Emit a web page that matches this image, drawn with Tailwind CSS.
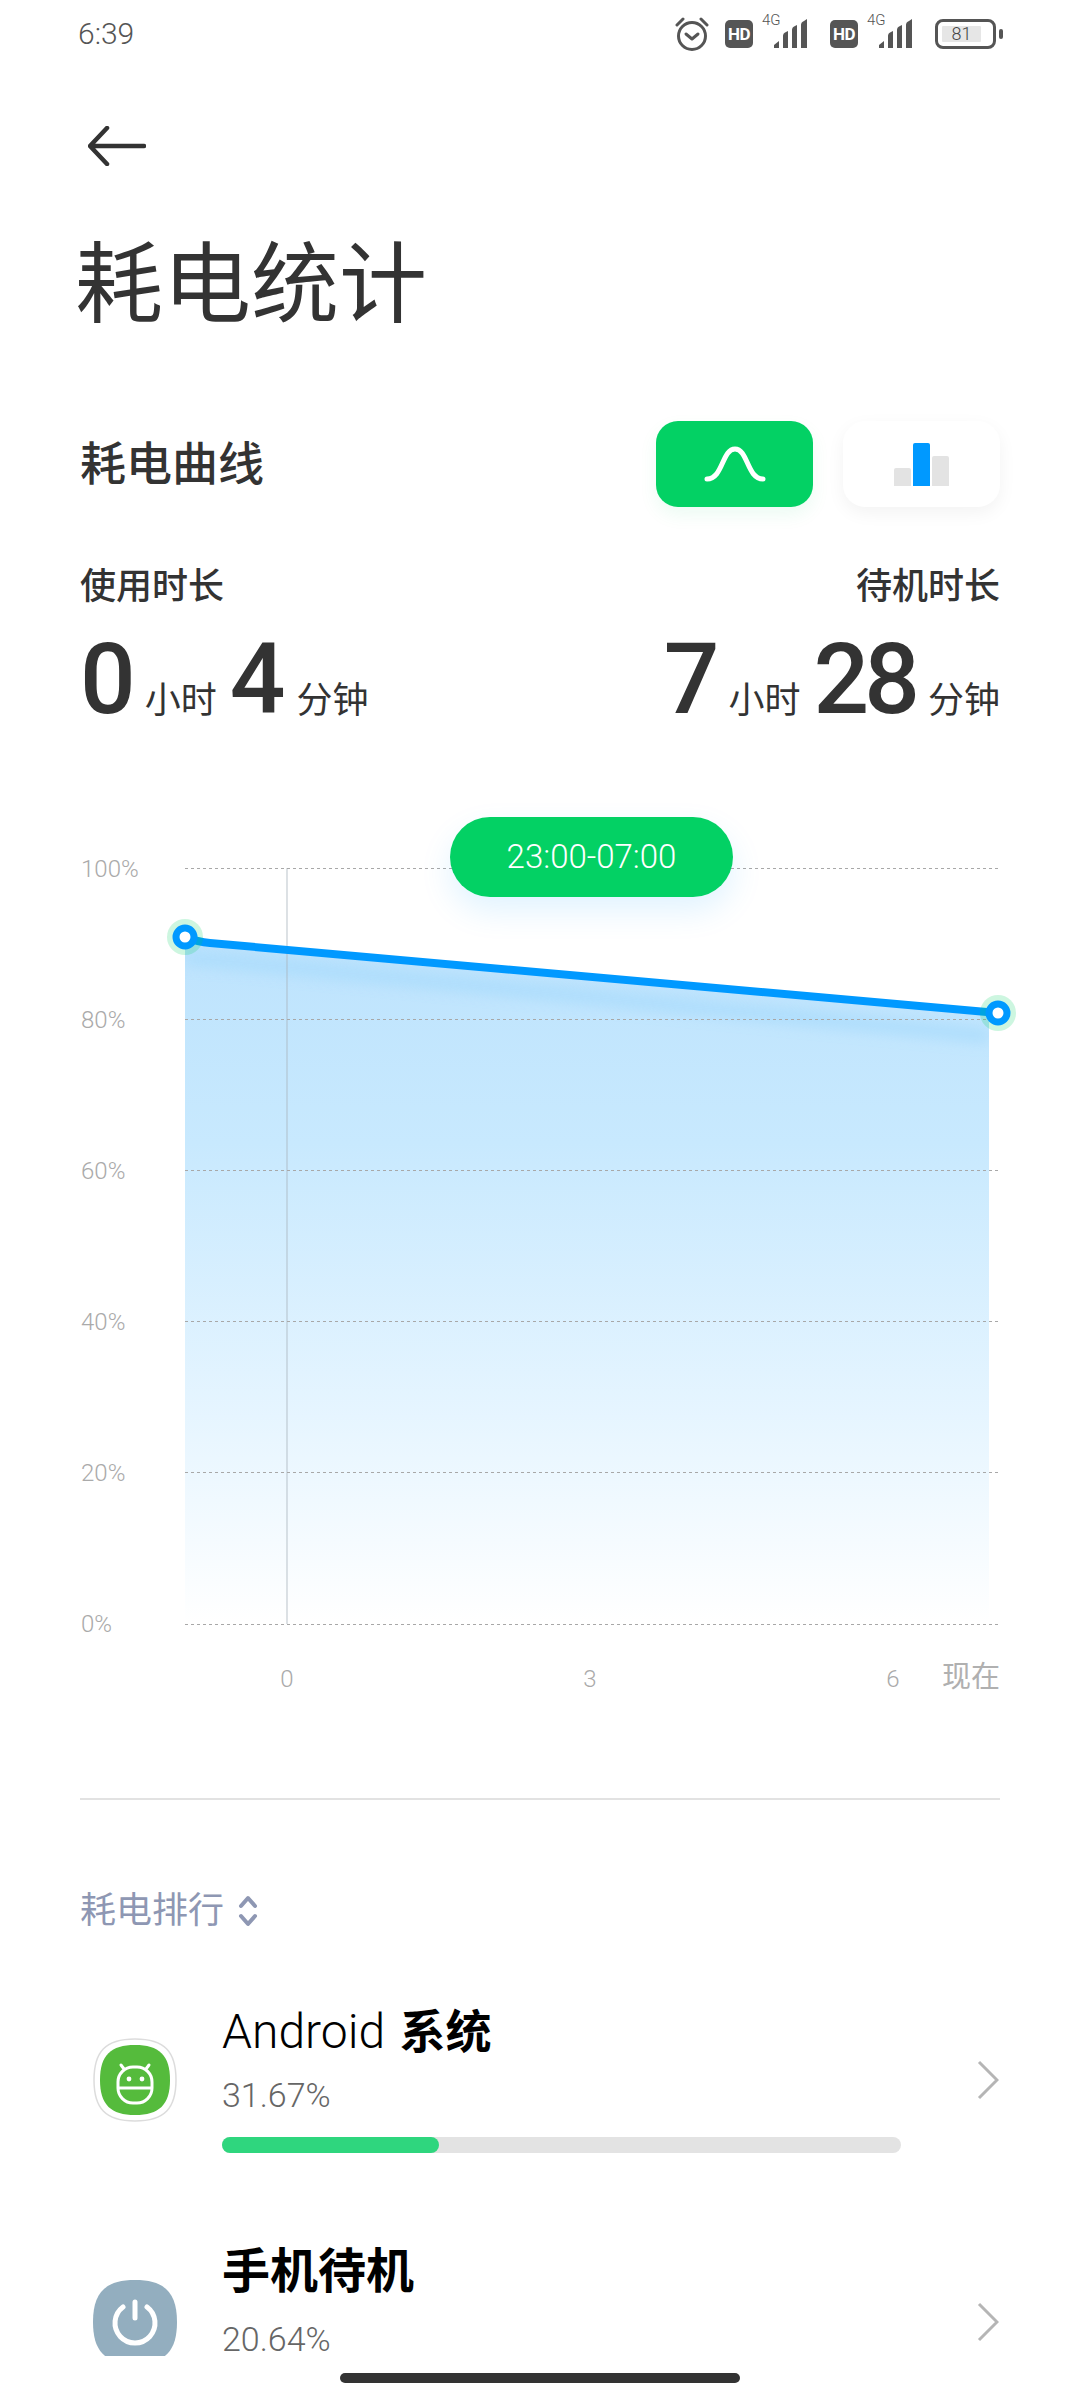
<!DOCTYPE html>
<html lang="zh-CN">
<head>
  <meta charset="UTF-8" />
  <meta name="viewport" content="width=device-width, initial-scale=1" />
  <title>耗电统计</title>
  <script src="https://cdn.jsdelivr.net/npm/@tailwindcss/browser@4"></script>
</head>
<body class="bg-white text-[#333] [font-family:Roboto,'Noto_Sans_CJK_SC',sans-serif]">
<div class="relative w-[1080px] h-[2400px] overflow-hidden bg-white">

  <!-- status bar -->
  <div class="flex items-center justify-between h-[68px] pl-[78px] pr-[77px] text-[#555]">
    <span class="text-[30px] font-light leading-none">6:39</span>
    <div class="flex items-center">
      <svg class="w-[34px] h-[36px]" viewBox="0 0 34 36" fill="none" stroke="#555" stroke-width="3">
        <circle cx="17" cy="20" r="13.5" />
        <path d="M2 9 8 3M32 9 26 3" stroke-linecap="round" />
        <path d="M11 18l6 5 6-5" stroke-linecap="round" stroke-linejoin="round" />
      </svg>
      <span class="ml-[16px] w-[28px] h-[28px] rounded-[5px] bg-[#555] text-white text-[17px] font-bold leading-[28px] text-center tracking-[-0.5px]">HD</span>
      <div class="relative ml-[9px] w-[52px] h-[30px]">
        <span class="absolute left-0 top-[-6px] text-[15px] font-light leading-none">4G</span>
        <svg class="w-[52px] h-[30px]" viewBox="0 0 52 30" fill="#555">
          <path d="M12 29v-3l5-4v7zM21 29V17q0-3 3-4l2-1v17zM30 29V11q0-3 3-4l2-1v23zM39 29V6q0-3 3-4l3-2v29z" />
        </svg>
      </div>
      <span class="ml-[16px] w-[28px] h-[28px] rounded-[5px] bg-[#555] text-white text-[17px] font-bold leading-[28px] text-center tracking-[-0.5px]">HD</span>
      <div class="relative ml-[9px] w-[52px] h-[30px]">
        <span class="absolute left-0 top-[-6px] text-[15px] font-light leading-none">4G</span>
        <svg class="w-[52px] h-[30px]" viewBox="0 0 52 30" fill="#555">
          <path d="M12 29v-3l5-4v7zM21 29V17q0-3 3-4l2-1v17zM30 29V11q0-3 3-4l2-1v23zM39 29V6q0-3 3-4l3-2v29z" />
        </svg>
      </div>
      <div class="ml-[16px] flex items-center">
        <div class="flex items-center w-[61px] h-[30px] rounded-[8px] border-[3.5px] border-[#555] pl-[4px]">
          <span class="w-[39px] h-[16px] bg-[#e6e6e6] rounded-[1px] text-[18px] font-light leading-[16px] text-center text-[#444]">81</span>
        </div>
        <span class="ml-[3px] w-[4px] h-[10px] rounded-full bg-[#555]"></span>
      </div>
    </div>
  </div>

  <!-- back -->
  <div class="pl-[88px] pt-[58px]">
    <svg class="block w-[58px] h-[40px]" viewBox="0 0 58 40" fill="none" stroke="#333" stroke-width="4.5" stroke-linecap="round" stroke-linejoin="round">
      <path d="M56 20H3M19 2 2 20l17 18" />
    </svg>
  </div>

  <h1 class="mt-[69px] pl-[75px] text-[88px] leading-[100px] font-normal">耗电统计</h1>

  <!-- section head -->
  <div class="mt-[86px] flex items-center justify-between pl-[80px] pr-[80px]">
    <h2 class="text-[46px] font-medium leading-[80px]">耗电曲线</h2>
    <div class="flex gap-[30px]">
      <div class="w-[157px] h-[86px] rounded-[22px] bg-[#03d164] shadow-[0_8px_18px_rgba(3,209,100,0.08)] flex items-center justify-center">
        <svg class="w-[64px] h-[40px]" viewBox="0 0 64 40" fill="none" stroke="#fff" stroke-width="5" stroke-linecap="round">
          <path d="M4 35C20 35 19 5 32 5s12 30 28 30" />
        </svg>
      </div>
      <div class="w-[157px] h-[86px] rounded-[22px] bg-white shadow-[0_6px_18px_rgba(0,0,0,0.05)] flex items-end justify-center gap-[2px] pb-[21px]">
        <span class="w-[17px] h-[18px] rounded-t-[2px] bg-[#e3e3e3]"></span>
        <span class="w-[17px] h-[43px] rounded-t-[2px] bg-[#0099ff]"></span>
        <span class="w-[17px] h-[30px] rounded-t-[2px] bg-[#e3e3e3]"></span>
      </div>
    </div>
  </div>

  <!-- durations -->
  <div class="mt-[60px] flex justify-between pl-[80px] pr-[80px]">
    <div>
      <div class="text-[36px] leading-[40px] font-medium">使用时长</div>
      <div class="mt-[23px] flex items-baseline gap-[13px] h-[100px]">
        <span class="text-[98px] leading-[100px] font-medium tracking-[-4px]">0</span>
        <span class="text-[36px]">小时</span>
        <span class="text-[98px] leading-[100px] font-medium tracking-[-2px]">4</span>
        <span class="text-[36px]">分钟</span>
      </div>
    </div>
    <div class="text-right">
      <div class="text-[36px] leading-[40px] font-medium">待机时长</div>
      <div class="mt-[23px] flex items-baseline justify-end gap-[13px] h-[100px]">
        <span class="text-[98px] leading-[100px] font-medium tracking-[-4px]">7</span>
        <span class="text-[36px]">小时</span>
        <span class="text-[98px] leading-[100px] font-medium tracking-[-5px]">28</span>
        <span class="text-[36px]">分钟</span>
      </div>
    </div>
  </div>

  <!-- chart, svg origin is y=800 of the page -->
  <div class="relative mt-[70px] h-[920px]">
    <svg class="block w-[1080px] h-[920px] [font-family:Roboto,'Noto_Sans_CJK_SC',sans-serif]" viewBox="0 800 1080 920">
      <defs>
        <linearGradient id="area" x1="0" y1="937" x2="0" y2="1623" gradientUnits="userSpaceOnUse">
          <stop offset="0" stop-color="#bde3fd" />
          <stop offset="0.3" stop-color="#c8e9fe" />
          <stop offset="0.7" stop-color="#e6f5ff" />
          <stop offset="1" stop-color="#ffffff" />
        </linearGradient>
        <clipPath id="areaClip">
          <path d="M185 937 L210 943 L989 1012 V1623 H185Z" />
        </clipPath>
        <filter id="soft" x="-5%" y="-100%" width="110%" height="300%">
          <feGaussianBlur stdDeviation="7" />
        </filter>
      </defs>

      <path d="M185 937 L210 943 L989 1012 V1623 H185Z" fill="url(#area)" />
      <g clip-path="url(#areaClip)">
        <path d="M185 957 L989 1036" fill="none" stroke="#a6dafc" stroke-width="14" filter="url(#soft)" opacity="0.75" />
      </g>

      <line x1="287" y1="868" x2="287" y2="1624" stroke="#a9b4bd" stroke-width="1" opacity="0.8" />

      <g stroke="#a8a8a8" stroke-width="1" stroke-dasharray="3 3">
        <line x1="185" y1="868.5" x2="1000" y2="868.5" />
        <line x1="185" y1="1019.5" x2="1000" y2="1019.5" />
        <line x1="185" y1="1170.5" x2="1000" y2="1170.5" />
        <line x1="185" y1="1321.5" x2="1000" y2="1321.5" />
        <line x1="185" y1="1472.5" x2="1000" y2="1472.5" />
        <line x1="185" y1="1624.5" x2="1000" y2="1624.5" />
      </g>

      <path d="M185 937 Q198 942 210 943 L998 1013" fill="none" stroke="#0099ff" stroke-width="8" />

      <circle cx="185" cy="937" r="18" fill="#03d164" opacity="0.2" />
      <circle cx="185" cy="937" r="9" fill="#fff" stroke="#0099ff" stroke-width="7" />
      <circle cx="998" cy="1013" r="18" fill="#03d164" opacity="0.2" />
      <circle cx="998" cy="1013" r="9" fill="#fff" stroke="#0099ff" stroke-width="7" />

      <g fill="#aaaaaa" font-size="24" font-weight="300">
        <text x="81" y="877">100%</text>
        <text x="81" y="1028">80%</text>
        <text x="81" y="1179">60%</text>
        <text x="81" y="1330">40%</text>
        <text x="81" y="1481">20%</text>
        <text x="81" y="1632">0%</text>
        <text x="287" y="1687" text-anchor="middle">0</text>
        <text x="590" y="1687" text-anchor="middle">3</text>
        <text x="893" y="1687" text-anchor="middle">6</text>
      </g>
      <text x="1000" y="1687" text-anchor="end" fill="#b0b0b0" font-size="29">现在</text>
    </svg>
    <div class="absolute left-[450px] top-[17px] w-[283px] h-[80px] rounded-full bg-[#03d164] shadow-[0_14px_32px_rgba(0,153,255,0.12)] flex items-center justify-center text-white text-[33px] font-light">23:00-07:00</div>
  </div>

  <div class="mt-[78px] mx-[80px] h-[2px] bg-[#e2e2e2]"></div>

  <!-- ranking -->
  <div class="mt-[91px] pl-[80px] flex items-center gap-[14px] h-[40px] text-[#8e97b3]">
    <span class="text-[36px] leading-[40px]">耗电排行</span>
    <svg class="w-[20px] h-[32px]" viewBox="0 0 20 32" fill="none" stroke="#8e97b3" stroke-width="4" stroke-linecap="round" stroke-linejoin="round">
      <path d="M3 11l7-8 7 8M3 21l7 8 7-8" />
    </svg>
  </div>

  <!-- row android -->
  <div class="mt-[69px] flex items-center h-[160px] pl-[93px] pr-[81px]">
    <svg class="w-[84px] h-[84px] shrink-0" viewBox="0 0 84 84">
      <path d="M42 1C72 1 83 14 83 42S72 83 42 83 1 70 1 42 12 1 42 1Z" fill="#fff" stroke="#dcdcdc" stroke-width="1.5" />
      <path d="M42 7C66 7 77 17 77 42S66 77 42 77 7 67 7 42 18 7 42 7Z" fill="#55bb3c" />
      <path d="M28 27l3 4M56 27l-3 4" stroke="#fff" stroke-width="3" stroke-linecap="round" />
      <rect x="25" y="29" width="34" height="36" rx="15" fill="none" stroke="#fff" stroke-width="3" />
      <path d="M25 50h34" stroke="#fff" stroke-width="3" />
      <circle cx="36" cy="41" r="2.4" fill="#fff" />
      <circle cx="49" cy="41" r="2.4" fill="#fff" />
    </svg>
    <div class="ml-[45px] w-[679px] self-start pt-[2px]">
      <div class="text-[46px] leading-[60px] text-black"><span class="text-[48px] font-light">Android</span> <span class="ml-[3px] font-bold">系统</span></div>
      <div class="mt-[11px] text-[34px] leading-[44px] font-light text-[#666]">31.67%</div>
      <div class="mt-[20px] h-[16px] rounded-full bg-[#e3e3e3]">
        <div class="h-[16px] rounded-full bg-[#2fd67e]" style="width: 32%"></div>
      </div>
    </div>
    <svg class="ml-auto w-[22px] h-[40px]" viewBox="0 0 22 40" fill="none" stroke="#b5b5b5" stroke-width="3">
      <path d="M2 2l18 18L2 38" />
    </svg>
  </div>

  <!-- row standby -->
  <div class="mt-[82px] flex items-center h-[160px] pl-[93px] pr-[81px]">
    <svg class="w-[84px] h-[84px] shrink-0" viewBox="0 0 84 84">
      <path d="M42 0C73 0 84 14 84 42S73 84 42 84 0 70 0 42 11 0 42 0Z" fill="#93aebf" />
      <path d="M30 27a20 20 0 1 0 24 0" fill="none" stroke="#fff" stroke-width="5" stroke-linecap="round" />
      <path d="M42 22v16" stroke="#fff" stroke-width="5" stroke-linecap="round" />
    </svg>
    <div class="ml-[45px] w-[679px] self-start">
      <div class="text-[48px] leading-[60px] font-bold text-black">手机待机</div>
      <div class="mt-[15px] text-[34px] leading-[44px] font-light text-[#666]">20.64%</div>
    </div>
    <svg class="ml-auto w-[22px] h-[40px]" viewBox="0 0 22 40" fill="none" stroke="#b5b5b5" stroke-width="3">
      <path d="M2 2l18 18L2 38" />
    </svg>
  </div>

  <!-- gesture bar over the list -->
  <div class="absolute left-0 right-0 bottom-0 h-[44px] bg-white flex justify-center pt-[17px]">
    <div class="w-[400px] h-[10px] rounded-full bg-[#333]"></div>
  </div>
</div>
</body>
</html>
